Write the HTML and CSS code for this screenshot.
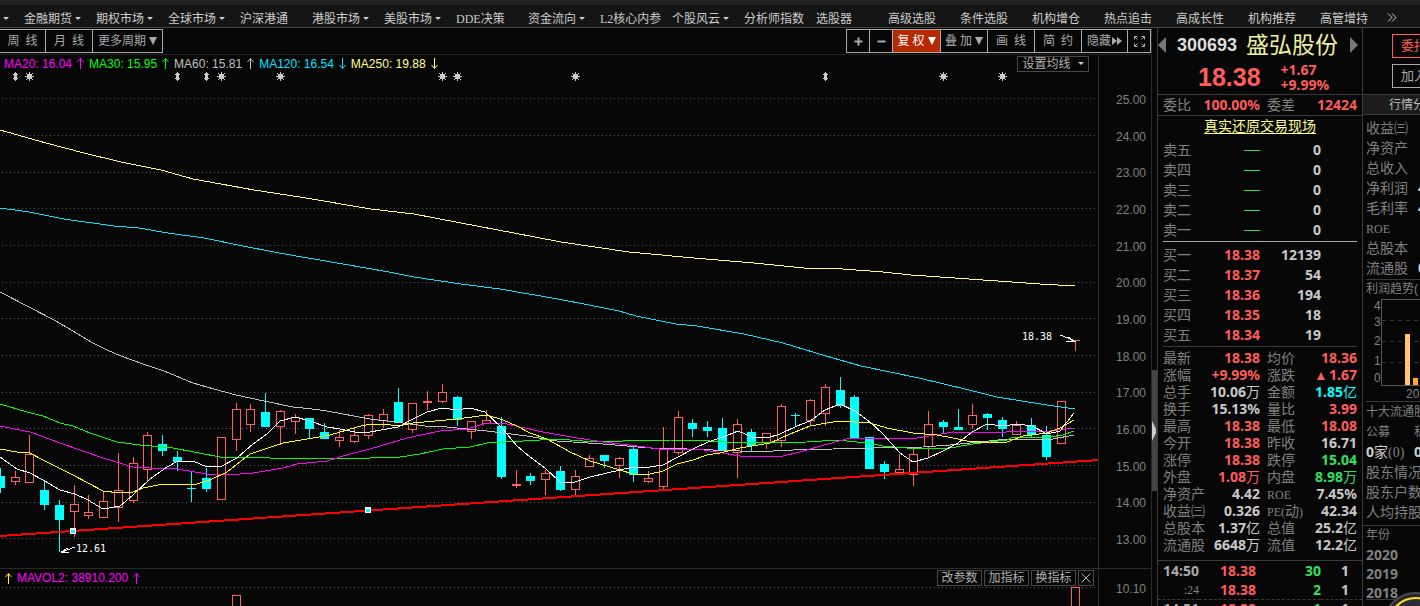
FILE: index.html
```html
<!DOCTYPE html>
<html lang="zh-CN">
<head>
<meta charset="utf-8">
<title>盛弘股份 300693</title>
<link rel="stylesheet" href="styles.css">
</head>
<body>
<div class="titlebar"></div>
<nav class="menu">
  <button class="menu-first dd" aria-label="更多"></button>
  <button class="dd">金融期货</button>
  <button class="dd">期权市场</button>
  <button class="dd">全球市场</button>
  <button>沪深港通</button>
  <button class="dd">港股市场</button>
  <button class="dd">美股市场</button>
  <button><span class="latin">DDE</span>决策</button>
  <button class="dd">资金流向</button>
  <button><span class="latin">L2</span>核心内参</button>
  <button class="dd">个股风云</button>
  <button>分析师指数</button>
  <button>选股器</button>
  <button>高级选股</button>
  <button>条件选股</button>
  <button>机构增仓</button>
  <button>热点追击</button>
  <button>高成长性</button>
  <button>机构推荐</button>
  <button>高管增持</button>
  <button class="menu-more" aria-label="展开"><svg width="10" height="9" viewBox="0 0 10 9"><path d="M1 0.500l4 4-4 4M5 0.500l4 4-4 4"/></svg></button>
</nav>
<main class="body">
  <section class="chart">
    <div class="toolbar">
      <div class="group">
        <button class="w45"><span>周</span><span>线</span></button>
        <button class="w47"><span>月</span><span>线</span></button>
        <button class="w70">更多周期<i class="tri"></i></button>
      </div>
      <div class="group">
        <button class="w22" aria-label="放大"><svg width="9" height="9"><path class="fat" d="M4.500 0.500v8M0.500 4.500h8"/></svg></button>
        <button class="w23" aria-label="缩小"><svg width="9" height="9"><path class="fat" d="M0.500 4.500h8"/></svg></button>
        <button class="w48 tight hot"><span>复</span><span>权</span><i class="tri"></i></button>
        <button class="w47 tight"><span>叠</span><span>加</span><i class="tri"></i></button>
        <button class="w47"><span>画</span><span>线</span></button>
        <button class="w47"><span>简</span><span>约</span></button>
        <button class="w46 near">隐藏<svg width="10" height="8"><path class="solid" d="M0 0l5 4-5 4zM5 0l5 4-5 4z"/></svg></button>
        <button class="w23" aria-label="全屏"><svg width="13" height="13"><path d="M1.500 4.500v-3h3M1.500 1.500l3 3M8.500 1.500h3v3M11.500 1.500l-3 3M1.500 8.500v3h3M1.500 11.500l3-3M11.500 8.500v3h-3M11.500 11.500l-3-3"/></svg></button>
      </div>
    </div>
    <div class="pane price">
      <div class="plot">
        <div class="legend">
          <span class="ma20">MA20: 16.04<svg class="arr" viewBox="0 0 7 11"><path d="M3.500 11v-10M0.500 4l3-3.500 3 3.500"/></svg></span>
          <span class="ma30">MA30: 15.95<svg class="arr" viewBox="0 0 7 11"><path d="M3.500 11v-10M0.500 4l3-3.500 3 3.500"/></svg></span>
          <span class="ma60">MA60: 15.81<svg class="arr" viewBox="0 0 7 11"><path d="M3.500 11v-10M0.500 4l3-3.500 3 3.500"/></svg></span>
          <span class="ma120">MA120: 16.54<svg class="arr" viewBox="0 0 7 11"><path d="M3.500 0v10M0.500 7l3 3.500 3-3.500"/></svg></span>
          <span class="ma250">MA250: 19.88<svg class="arr" viewBox="0 0 7 11"><path d="M3.500 0v10M0.500 7l3 3.500 3-3.500"/></svg></span>
          <button class="boxed set-ma">设置均线<i class="caret"></i></button>
        </div>
        <svg class="canvas" id="price" width="1099" height="496" viewBox="0 72 1099 496">
          <g id="marks"></g>
          <g id="grid"></g>
          <g id="candles"></g>
          <polyline class="l-ma60" points="0,292 29,307 54,320 73,331 91,342 107,350 121,356 143,364 164,371 193,383 214,389 236,395 264,401 293,407 312,409 327,411 370,419 403,423 425,426 447,427 487,431 527,436 557,441 603,444 650,448 687,449 713,450 740,451 773,451 793,450 833,449 873,448 923,447 950,445 980,442 1007,439 1053,439 1074,435"/>
          <polyline class="l-ma30" points="0,404 27,412 43,416 60,423 73,426 90,433 117,442 140,445 173,448 220,457 250,457 290,459 307,458 370,458 400,457 420,454 443,449 470,447 487,443 523,441 557,439 583,441 623,441 637,440 670,440 710,441 740,443 807,442 837,440 867,443 883,446 907,448 930,449 950,448 973,444 1007,440 1013,437 1050,437 1063,435 1074,431"/>
          <polyline class="l-ma20" points="0,426 30,432 60,443 103,458 133,467 150,468 177,469 207,474 227,475 253,473 283,468 297,464 327,461 350,454 370,449 407,438 440,431 467,429 487,423 503,423 520,427 543,432 577,438 603,442 637,446 660,449 697,449 717,452 740,456 783,456 800,452 817,447 850,438 880,438 900,439 917,438 953,432 1000,433 1013,431 1050,431 1074,428"/>
          <polyline class="l-ma10" points="0,449 17,452 30,453 43,460 73,475 103,491 120,493 133,492 143,488 163,484 180,485 197,484 210,480 227,472 250,454 283,443 313,438 330,435 357,427 370,424 383,424 398,426 413,423 457,419 487,415 503,420 517,426 530,433 547,439 570,452 590,461 620,470 633,474 650,474 663,471 677,464 693,460 707,455 720,453 740,448 770,443 790,434 810,426 827,423 840,421 870,423 887,428 913,433 937,435 953,438 967,441 993,443 1007,442 1023,436 1047,433 1060,428 1074,420"/>
          <polyline class="l-ma5" points="0,457 17,469 30,473 43,480 60,490 75,494 88,500 103,509 120,506 133,495 150,479 167,467 178,461 193,461 207,467 222,466 237,458 253,444 267,434 280,421 295,417 310,421 327,427 340,429 355,432 370,432 398,427 413,419 427,412 442,408 457,410 470,408 485,412 502,428 517,446 530,457 545,468 560,482 575,482 590,477 607,473 633,467 650,467 663,465 678,457 693,449 708,442 723,437 738,431 752,437 767,438 780,434 797,426 810,421 825,410 840,404 855,411 870,422 883,434 900,453 913,462 928,458 943,451 958,443 972,432 987,424 1003,426 1017,424 1032,426 1047,434 1060,431 1074,413"/>
          <polyline class="l-ma120" points="0,208 29,212 64,219 114,226 139,228 168,233 204,238 243,246 279,253 343,264 389,272 414,277 461,284 500,289 558,299 594,306 619,311 636,316 676,324 697,326 744,334 783,343 826,356 861,366 919,378 969,390 997,397 1047,405 1075,409"/>
          <polyline class="l-ma250" points="0,130 46,143 84,153 121,162 161,170 193,179 221,184 254,190 300,197 371,209 414,214 461,223 514,233 561,242 629,252 694,258 754,263 804,268 829,268 883,272 911,275 969,279 1040,284 1075,286"/>
          <path class="trend" d="M0 536L1099 460"/>
          <path class="handle" d="M70 528h6v6h-6zM365 507h6v6h-6z"/>
          <path class="handle-core" d="M71 530h4v3h-4zM366 509h4v3h-4z"/>
          <path class="pointer" d="M75 547L62 552M68 548l-7 4 8 1M1060 335L1073 340M1068 337l6 4-8 0"/>
          <text class="tag" x="76" y="552">12.61</text>
          <text class="tag" x="1022" y="340">18.38</text>
        </svg>
      </div>
      <div class="axis">
        <span>25.00</span><span>24.00</span><span>23.00</span><span>22.00</span><span>21.00</span><span>20.00</span><span>19.00</span><span>18.00</span><span>17.00</span><span>16.00</span><span>15.00</span><span>14.00</span><span>13.00</span>
      </div>
    </div>
    <div class="pane volume">
      <div class="plot">
        <div class="legend">
          <span class="vol1"><svg class="arr" viewBox="0 0 7 11"><path d="M3.500 11v-10M0.500 4l3-3.500 3 3.500"/></svg></span>
          <span class="ma20">MAVOL2: 38910.200<svg class="arr" viewBox="0 0 7 11"><path d="M3.500 11v-10M0.500 4l3-3.500 3 3.500"/></svg></span>
          <div class="indicators">
            <button class="boxed">改参数</button>
            <button class="boxed">加指标</button>
            <button class="boxed">换指标</button>
            <button class="boxed close" aria-label="关闭"><svg width="10" height="10"><path d="M0.500 0.500l9 9M9.500 0.500l-9 9"/></svg></button>
          </div>
        </div>
        <svg class="canvas" width="1099" height="24" viewBox="0 587 1099 24">
          <path class="dots" d="M2 587.500H1099"/>
          <path class="up" d="M232.500 620V595.500h8V620M1071.500 620V587.500h8V620"/>
        </svg>
      </div>
      <div class="axis"><span>10.10</span></div>
    </div>
  </section>
  <div class="splitter"><div class="thumb"><svg width="4" height="20"><path d="M0 0l4 8v4l-4 8z"/></svg></div></div>
  <section class="quote">
    <header class="stock">
      <div class="ident">
        <button class="step prev" aria-label="上一只"></button>
        <span class="code">300693</span>
        <h1>盛弘股份</h1>
        <button class="step next" aria-label="下一只"></button>
      </div>
      <div class="last"><b>18.38</b><div><span>+1.67</span><span>+9.99%</span></div></div>
    </header>
    <div class="ratio"><span>委比</span><b class="r">100.00%</b><span>委差</span><b class="r">12424</b></div>
    <a class="live" href="#">真实还原交易现场</a>
    <table class="book">
      <tr><th>卖五</th><td><i class="dash"></i></td><td>0</td></tr>
      <tr><th>卖四</th><td><i class="dash"></i></td><td>0</td></tr>
      <tr><th>卖三</th><td><i class="dash"></i></td><td>0</td></tr>
      <tr><th>卖二</th><td><i class="dash"></i></td><td>0</td></tr>
      <tr><th>卖一</th><td><i class="dash"></i></td><td>0</td></tr>
    </table>
    <table class="book bids">
      <tr><th>买一</th><td class="r">18.38</td><td>12139</td></tr>
      <tr><th>买二</th><td class="r">18.37</td><td>54</td></tr>
      <tr><th>买三</th><td class="r">18.36</td><td>194</td></tr>
      <tr><th>买四</th><td class="r">18.35</td><td>18</td></tr>
      <tr><th>买五</th><td class="r">18.34</td><td>19</td></tr>
    </table>
    <table class="stats">
      <tr><th>最新</th><td class="r">18.38</td><th>均价</th><td class="r">18.36</td></tr>
      <tr><th>涨幅</th><td class="r">+9.99%</td><th>涨跌</th><td class="r"><i class="up-tri"></i>1.67</td></tr>
      <tr><th>总手</th><td>10.06<em>万</em></td><th>金额</th><td class="c">1.85<em>亿</em></td></tr>
      <tr><th>换手</th><td>15.13%</td><th>量比</th><td class="r">3.99</td></tr>
      <tr><th>最高</th><td class="r">18.38</td><th>最低</th><td class="r">18.08</td></tr>
      <tr><th>今开</th><td class="r">18.38</td><th>昨收</th><td>16.71</td></tr>
      <tr><th>涨停</th><td class="r">18.38</td><th>跌停</th><td class="g">15.04</td></tr>
      <tr><th>外盘</th><td class="r">1.08<em>万</em></td><th>内盘</th><td class="g">8.98<em>万</em></td></tr>
      <tr><th>净资产</th><td>4.42</td><th><span class="latin">ROE</span></th><td>7.45%</td></tr>
      <tr><th>收益㈢</th><td>0.326</td><th><span class="latin">PE(</span>动<span class="latin">)</span></th><td>42.34</td></tr>
      <tr><th>总股本</th><td>1.37<em>亿</em></td><th>总值</th><td>25.2<em>亿</em></td></tr>
      <tr><th>流通股</th><td>6648<em>万</em></td><th>流值</th><td>12.2<em>亿</em></td></tr>
    </table>
    <table class="ticks">
      <tr><th>14:50</th><td class="r">18.38</td><td class="g">30</td><td>1</td></tr>
      <tr><th class="sec">:24</th><td class="r">18.38</td><td class="g">2</td><td>1</td></tr>
      <tr class="minute"><th>14:51</th><td class="r">18.38</td><td class="g">1</td><td>1</td></tr>
    </table>
  </section>
  <aside class="info">
    <div class="actions"><button class="trade">委托</button><button>加入</button></div>
    <button class="tab">行情分</button>
    <dl class="facts">
      <div><dt>收益㈢</dt><dd></dd></div>
      <div><dt>净资产</dt><dd></dd></div>
      <div><dt>总收入</dt><dd></dd></div>
      <div><dt>净利润</dt><dd>4</dd></div>
      <div><dt>毛利率</dt><dd>4</dd></div>
      <div><dt><span class="latin">ROE</span></dt><dd></dd></div>
      <div><dt>总股本</dt><dd></dd></div>
      <div><dt>流通股</dt><dd>0</dd></div>
    </dl>
    <div class="trend-box">
      <div class="small">利润趋势(</div>
      <svg width="60" height="104" viewBox="1363 298 60 104">
        <path class="frame" d="M1430 299.500H1381.500V385.500H1430"/>
        <path class="dashes" d="M1382 320.500h50M1382 341.500h50M1382 362.500h50"/>
        <path fill="#ffc966" stroke="none" d="M1405 334h5v51h-5z"/><path fill="#ffa726" stroke="none" d="M1413 378h5v7h-5z"/>
        <g class="nums"><text x="1374" y="310">4</text><text x="1374" y="326">3</text><text x="1374" y="345">2</text><text x="1374" y="365">1</text><text x="1374" y="382">0</text><text x="1406" y="398">20</text></g>
      </svg>
    </div>
    <div class="holders">
      <div class="small">十大流通股</div>
      <div class="small pair"><span>公募</span><span>私</span></div>
      <div class="pair"><span class="w"><b>0</b>家<span class="latin">(0)</span></span><b class="w">0</b></div>
      <div>股东情况</div>
      <div>股东户数</div>
      <div>人均持股</div>
    </div>
    <div class="years">
      <div class="small">年份</div>
      <b>2020</b><b>2019</b><b>2018</b>
    </div>
  </aside>
</main>
<svg class="orb" width="68" height="68" viewBox="0 0 68 68"><circle cx="34" cy="34" r="33" fill="#26262c" stroke="#4a4a50" stroke-width="2"/><circle cx="34" cy="34" r="28" fill="#2b2c35" stroke="#ffe21a" stroke-width="2"/></svg>
<script src="chart.js"></script>
</body>
</html>
```

FILE: styles.css
```css
* { box-sizing: border-box; }
body {
  margin: 0; height: 100vh; overflow: hidden; display: flex; flex-direction: column;
  background: #070707; color: #c8c8c8;
  font: 12px/16px "Liberation Sans", "Noto Sans CJK SC", sans-serif;
}
button { font: inherit; color: inherit; background: none; border: 0; padding: 0; margin: 0; white-space: nowrap; }
svg { display: block; fill: none; stroke: currentColor; flex: none; }
.latin { font-family: "Liberation Serif", serif; }

.titlebar { flex: none; height: 5px; background: #222; }
.menu {
  flex: none; height: 23px; display: grid; grid-template-columns: 24px repeat(18, 72px) 67px auto;
  justify-content: start; align-items: center; padding-top: 5px; background: #151515; border-bottom: 1px solid #444; overflow: hidden;
}
.menu button { display: flex; align-items: center; text-align: left; color: #ccc; }
.menu .menu-first { padding-left: 3px; }
.menu .menu-more { padding-bottom: 3px; }
.dd::after, .caret { content: ""; border: 3px solid transparent; border-top-color: #ccc; border-bottom: 0; margin-left: 3px; }
.menu .menu-first::after { margin-left: 0; }

.body { flex: 1; min-height: 0; display: flex; }
.chart { flex: 1; min-width: 0; display: flex; flex-direction: column; border-right: 1px solid #2a2a2a; }
.toolbar { flex: none; height: 27px; padding-top: 1px; display: flex; justify-content: space-between; border-bottom: 1px solid #222; }
.group { display: flex; height: 24px; border: 1px solid #aaa; }
.group:first-child { border-left: 0; }
.group button { display: flex; align-items: center; justify-content: center; gap: 6px; color: #aaa; border-left: 1px solid #aaa; }
.group button:first-child { border-left: 0; }
.group .tight { gap: 3px; }
.group .near { gap: 1px; }
.group .w70 { gap: 3px; }
.group .hot { background: #b52a00; color: #fff; }
.w22 { width: 22px; } .w23 { width: 23px; } .w45 { width: 45px; } .w46 { width: 46px; } .w47 { width: 47px; } .w48 { width: 48px; } .w70 { width: 70px; }
.tri { border: 4px solid transparent; border-top: 8px solid currentColor; border-bottom: 0; }
.fat { stroke-width: 2; }
.solid { fill: currentColor; stroke: none; }

.pane { display: flex; }
.plot { flex: 1; min-width: 0; overflow: hidden; border-right: 1px solid #2a2a2a; }
.axis { flex: none; width: 52px; padding-right: 5px; text-align: right; color: #808080; line-height: 14px; }
.price .axis { display: flex; flex-direction: column; justify-content: space-between; padding-top: 38px; padding-bottom: 21px; }
.volume { flex: 1; border-top: 1px solid #2a2a2a; }
.volume .axis { padding-top: 13px; }
.legend { height: 17px; display: flex; align-items: center; padding-left: 4px; gap: 5px; padding-right: 9px; }
.legend > span { display: flex; align-items: center; gap: 5px; white-space: nowrap; }
.volume .legend { height: 18px; padding-left: 5px; padding-right: 4px; }
.arr { width: 7px; height: 11px; }
.ma20 { color: #f0f; } .ma30 { color: #0f0; } .ma60 { color: #c0c0c0; } .ma120 { color: #00e5ff; } .ma250 { color: #ffff90; } .vol1 { color: #ff0; }
.boxed { display: flex; align-items: center; justify-content: center; height: 16px; border: 1px solid #484848; color: #b0b0b0; line-height: 14px; background: #070707; }
.set-ma { margin-left: auto; width: 72px; gap: 4px; }
.indicators { margin-left: auto; display: flex; gap: 2px; }
.indicators .boxed { width: 45px; }
.indicators .close { width: 16px; }

.canvas { shape-rendering: crispEdges; }
.dots { stroke: #555; stroke-dasharray: 1 3; }
.up { stroke: #ff5f5f; fill: none; }
.hollow { fill: #070707; stroke: #ff5f5f; }
.down { fill: #0ff; stroke: none; }
.mark { fill: #ccc; stroke: none; }
.mark-rays { stroke: #ccc; }
.l-ma5 { stroke: #fff; } .l-ma10 { stroke: #ff0; } .l-ma20 { stroke: #f0f; } .l-ma30 { stroke: #0f0; }
.l-ma60 { stroke: #c0c0c0; } .l-ma120 { stroke: #00e5ff; } .l-ma250 { stroke: #ffff90; }
.trend { stroke: #f00; stroke-width: 2; }
.handle { fill: #fff; stroke: none; } .handle-core { fill: #0ff; stroke: none; }
.pointer { stroke: #fff; }
.tag { font: 10px "DejaVu Sans Mono", monospace; fill: #fff; stroke: none; }

.splitter { flex: none; width: 5px; padding-top: 342px; }
.thumb { height: 121px; background: #444; display: flex; align-items: center; }
.thumb svg { fill: #ccc; stroke: none; }

.quote { flex: none; width: 206px; border-left: 1px solid #3a3a3a; border-right: 1px solid #3a3a3a; }
.r { color: #ff5c5c; } .g { color: #33e060; } .c { color: #0ff; }
.stock { height: 67px; border-bottom: 1px solid #3a3a3a; }
.ident { display: flex; align-items: center; height: 34px; }
.step { border: 8px solid transparent; }
.prev { border-left: 0; border-right-color: #777; margin-right: 11px; }
.next { border-right: 0; border-left-color: #777; margin-left: 12px; }
.code { font-size: 18px; font-weight: bold; color: #ddd; margin-right: 9px; }
h1 { margin: 0; font-size: 23px; line-height: 30px; font-weight: normal; color: #eeeea0; }
.last { display: flex; align-items: center; height: 30px; padding-left: 40px; color: #ff5c5c; gap: 20px; }
.last b { font-size: 25px; }
.last div { font: bold 14px/15px "Noto Sans", sans-serif; display: grid; }
.ratio { display: grid; grid-template-columns: 28px 69px 34px 1fr; height: 21px; align-items: center; padding: 0 5px; font-size: 14px; color: #808080; border-bottom: 1px solid #3a3a3a; }
.ratio b { font-family: "Noto Sans", sans-serif; text-align: right; }
.ratio span + b + span { padding-left: 7px; white-space: nowrap; }
.live { display: block; text-align: center; font-size: 14px; line-height: 20px; height: 24px; color: #ffff90; text-underline-offset: 2px; }
table { border-collapse: separate; border-spacing: 0; table-layout: fixed; }
th, td { padding: 0; text-align: right; white-space: nowrap; vertical-align: middle; }
th { text-align: left; font-weight: normal; font-size: 14px; line-height: 16px; color: #808080; }
td { font: bold 14px/16px "Noto Sans", "Noto Sans CJK SC", sans-serif; }
em { font-style: normal; font-weight: normal; line-height: 1px; }
.book { width: 194px; margin: 0 5px; padding-bottom: 1px; border-bottom: 1px solid #aaa; }
.book tr { height: 20px; }
.book th { width: 28px; } .book td:nth-child(2) { width: 69px; }
.book td:last-child { padding-right: 36px; }
.bids { padding-top: 3px; border-bottom-color: #3a3a3a; }
.dash { display: block; width: 16px; height: 1px; background: #33e060; margin-left: auto; }
.stats { width: 194px; margin: 2px 5px 0; }
.stats tr { height: 17px; }
.stats th:first-child { width: 42px; } .stats td:nth-child(2) { width: 55px; } .stats th:nth-child(3) { width: 48px; padding-left: 7px; }
.stats th .latin { font-size: 12px; line-height: 1px; }
.up-tri { display: inline-block; border: 4px solid transparent; border-bottom: 8px solid #ff5c5c; border-top: 0; margin-right: 4px; }
.ticks { width: 204px; margin-top: 7px; border-top: 1px solid #3a3a3a; }
.ticks tr { height: 19px; }
.ticks th { padding-left: 5px; width: 41px; font: bold 14px/16px "Noto Sans", sans-serif; color: #aaa; }
.ticks .sec { font: 12px/16px "Liberation Serif", serif; text-align: right; color: #808080; }
.ticks td:nth-child(2) { width: 57px; } .ticks td:nth-child(3) { width: 65px; } .ticks td:last-child { padding-right: 13px; }
.ticks .minute > * { border-top: 1px dashed #3a3a3a; }

.info { flex: none; width: 57px; overflow: hidden; font-size: 14px; color: #808080; white-space: nowrap; }
.actions { height: 67px; padding: 6px 0 0 29px; display: flex; flex-direction: column; gap: 6px; border-bottom: 1px solid #3a3a3a; }
.actions button { height: 24px; width: 60px; padding-left: 8px; text-align: left; border: 1px solid #aaa; color: #aaa; font-size: 13px; }
.actions .trade { color: #ff5c5c; border-color: #ff5c5c; }
.info .tab { display: block; width: 100%; height: 20px; padding-left: 26px; text-align: left; background: #1c1c1c; border-bottom: 1px solid #3a3a3a; font-size: 12px; color: #bbb; }
.facts { margin: 0 0 0 3px; padding-top: 3px; height: 165px; border-bottom: 1px solid #3a3a3a; }
.facts div { display: flex; height: 20px; align-items: center; }
dt { width: 52px; flex: none; } dd { margin: 0; }
dd { font-family: "Noto Sans", sans-serif; font-weight: bold; color: #ccc; }
.facts .latin { font-size: 12px; }
.small { font-size: 12px; }
.trend-box { height: 122px; margin-left: 3px; border-bottom: 1px solid #3a3a3a; }
.trend-box .small { height: 18px; line-height: 19px; }
.trend-box svg { margin-left: -3px; shape-rendering: crispEdges; }
.frame { stroke: #555; } .dashes { stroke: #333; stroke-dasharray: 4 4; }
.nums { fill: #808080; stroke: none; font-size: 12px; }
.holders { height: 124px; padding-left: 3px; line-height: 20px; border-bottom: 1px solid #3a3a3a; }
.holders > div { height: 20px; }
.pair { display: flex; }
.pair > :first-child { width: 48px; flex: none; }
.holders .w, .holders .w b { color: #ccc; } .holders b { font-family: "Noto Sans", sans-serif; } .holders .w .latin { color: #808080; }
.years { margin-left: 3px; line-height: 19px; height: 74px; border-bottom: 1px solid #3a3a3a; }
.years b { display: block; font-family: "Noto Sans", sans-serif; }
.orb { position: fixed; right: -30px; bottom: -54px; }
```

FILE: chart.js
```js
// centre x, body top, body bottom, high, low; d marks a falling day
const candles = `0 476 488 468 493 d|15 477 482 471 485|29 454 483 435 483|44 490 505 480 510 d|59 505 520 500 552 d|74 504 512 485 537|88 512 516 495 519|103 501 518 491 518|118 490 508 453 522|133 463 501 457 503|147 435 470 432 481|162 444 451 435 456 d|177 457 462 451 471 d|191 488 489 472 502 d|206 478 489 468 492 d|221 437 500 437 500|236 409 440 403 451|250 409 425 404 432|265 412 427 393 427 d|280 411 427 410 445|295 417 422 414 434|309 418 429 418 439 d|324 432 439 423 439 d|339 437 441 430 447|354 435 442 427 443|368 415 436 414 439|383 414 421 409 428|398 402 423 388 423 d|412 403 430 403 433|427 401 403 391 410|442 392 402 384 403|457 397 420 396 426 d|471 421 432 421 439|486 420 424 410 424|501 426 477 417 479 d|516 484 486 470 488|530 476 481 473 485 d|545 473 480 470 495|560 471 490 466 491 d|575 476 490 470 495|589 458 467 455 467|604 455 461 455 468 d|619 458 466 457 478|633 449 475 446 482 d|648 478 482 471 483|663 449 487 427 489|678 417 453 411 455|692 423 429 419 437 d|707 427 431 421 437 d|722 428 450 418 450 d|737 424 453 419 478|751 432 446 429 451 d|766 433 443 433 449|781 406 441 404 447|795 415 416 413 426 d|810 400 421 399 426|825 387 414 384 426|840 390 406 377 408 d|854 397 438 395 438 d|869 437 469 437 469 d|884 464 472 461 479 d|899 469 473 454 473|913 454 475 449 486|928 424 447 411 457|943 422 427 420 433 d|958 427 430 409 430 d|972 415 425 404 429|987 414 418 413 430 d|1002 420 429 417 437 d|1016 425 435 421 435|1031 425 435 418 437 d|1046 435 457 426 460 d|1061 401 444 401 444|1075 340 341 340 351`;

const path = (cls, d) => `<path class="${cls}" d="${d}"/>`;

document.getElementById("candles").innerHTML = candles.split("|").map(row => {
  const [c, top, bottom, high, low, falling] = row.split(" ");
  const x = +c;
  if (falling) {
    return path("down", `M${x - 4} ${top}h9V${bottom}h-9zM${x} ${high}h1V${low}h-1z`);
  }
  const body = bottom - top > 1
    ? path("hollow", `M${x - 3.5} ${+top + 0.5}h8V${bottom - 0.5}h-8z`)
    : path("up", `M${x - 4} ${+top + 0.5}h9`);
  return path("up", `M${x + 0.5} ${high}V${top}M${x + 0.5} ${bottom}V${low}`) + body;
}).join("");

document.getElementById("grid").innerHTML =
  [98, 135, 172, 208, 245, 282, 318, 355, 392, 428, 465, 502, 538]
    .map(y => path("dots", `M2 ${y + 0.5}H1099`)).join("");

const stars = [29, 221, 280, 442, 457, 575, 943, 1002];
const swings = [15, 177, 206, 825];
document.getElementById("marks").innerHTML =
  stars.map(x => path("mark", `M${x - 2} 74h5v5h-5z`) +
    path("mark-rays", `M${x + 0.5} 72v9M${x - 4} 76.500h9M${x - 3} 73l7 7M${x + 4} 73l-7 7`)).join("") +
  swings.map(x => path("mark", `M${x} 72h1v1h1v1h1v1h-1v3h1v1h-1v1h-1v1h-1v-1h-1v-1h-1v-1h1v-3h-1v-1h1v-1h1z`)).join("");
```
